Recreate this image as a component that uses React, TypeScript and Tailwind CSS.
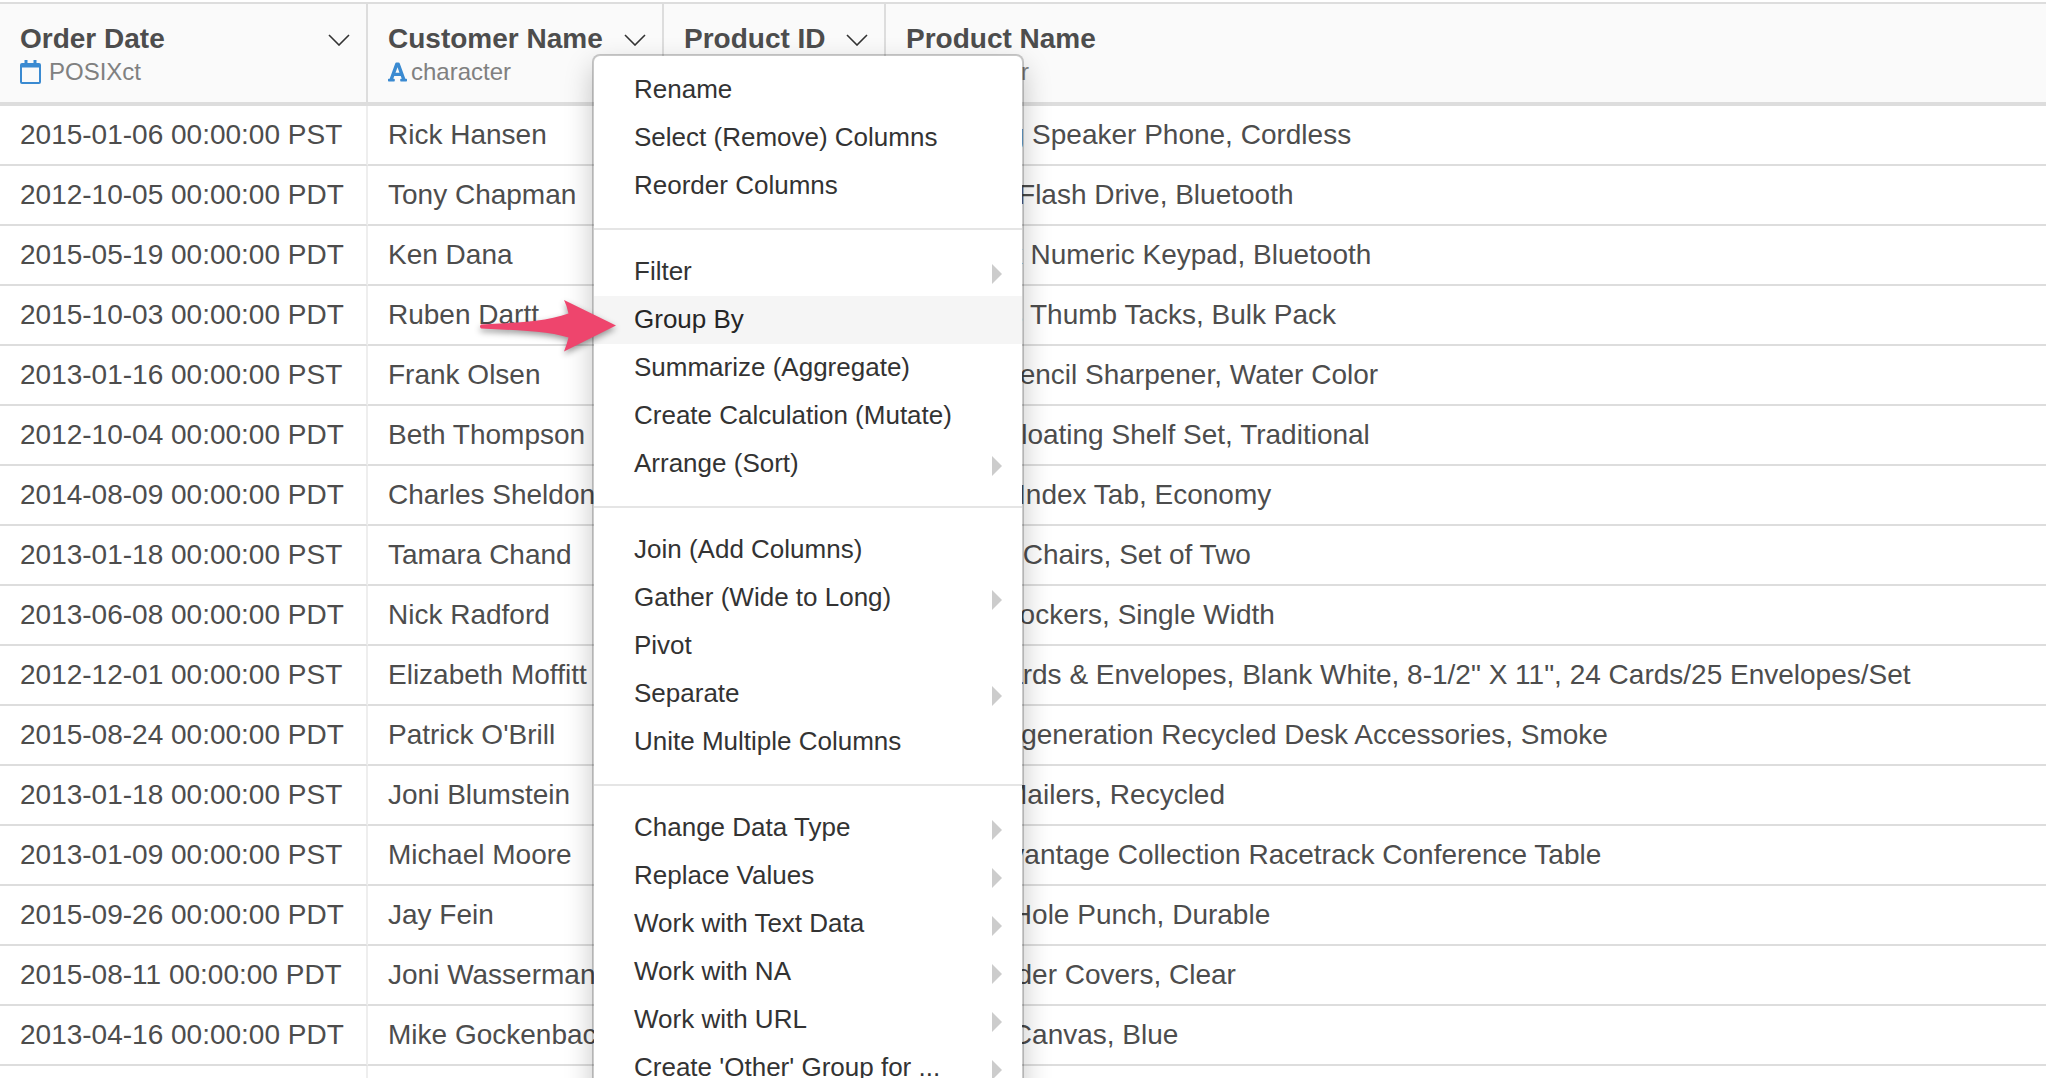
import { FaFont } from "react-icons/fa";

type ColumnType = "POSIXct" | "character";

const columns: { name: string; type: ColumnType; width: string; menu: boolean }[] = [
  { name: "Order Date", type: "POSIXct", width: "w-[368px]", menu: true },
  { name: "Customer Name", type: "character", width: "w-[296px]", menu: true },
  { name: "Product ID", type: "character", width: "w-[222px]", menu: true },
  { name: "Product Name", type: "character", width: "", menu: false },
];

const rows: [string, string, string, string][] = [
  ["2015-01-06 00:00:00 PST", "Rick Hansen", "", "Samsung Speaker Phone, Cordless"],
  ["2012-10-05 00:00:00 PDT", "Tony Chapman", "", "SanDisk Flash Drive, Bluetooth"],
  ["2015-05-19 00:00:00 PDT", "Ken Dana", "", "Memorex Numeric Keypad, Bluetooth"],
  ["2015-10-03 00:00:00 PDT", "Ruben Dartt", "", "Advantus Thumb Tacks, Bulk Pack"],
  ["2013-01-16 00:00:00 PST", "Frank Olsen", "", "Boston Pencil Sharpener, Water Color"],
  ["2012-10-04 00:00:00 PDT", "Beth Thompson", "", "Sauder Floating Shelf Set, Traditional"],
  ["2014-08-09 00:00:00 PDT", "Charles Sheldon", "", "Cardinal Index Tab, Economy"],
  ["2013-01-18 00:00:00 PST", "Tamara Chand", "", "Novimex Chairs, Set of Two"],
  ["2013-06-08 00:00:00 PDT", "Nick Radford", "", "Rogers Lockers, Single Width"],
  ["2012-12-01 00:00:00 PST", "Elizabeth Moffitt", "", "Xerox Cards & Envelopes, Blank White, 8-1/2\" X 11\", 24 Cards/25 Envelopes/Set"],
  ["2015-08-24 00:00:00 PDT", "Patrick O'Brill", "", "Eldon Regeneration Recycled Desk Accessories, Smoke"],
  ["2013-01-18 00:00:00 PST", "Joni Blumstein", "", "Cameo Mailers, Recycled"],
  ["2013-01-09 00:00:00 PST", "Michael Moore", "", "Bush Advantage Collection Racetrack Conference Table"],
  ["2015-09-26 00:00:00 PDT", "Jay Fein", "", "Sanford Hole Punch, Durable"],
  ["2015-08-11 00:00:00 PDT", "Joni Wasserman", "", "Acco Binder Covers, Clear"],
  ["2013-04-16 00:00:00 PDT", "Mike Gockenbach", "", "Sanford Canvas, Blue"],
  ["", "", "", ""],
];

const menuGroups: { label: string; submenu?: boolean; active?: boolean }[][] = [
  [{ label: "Rename" }, { label: "Select (Remove) Columns" }, { label: "Reorder Columns" }],
  [
    { label: "Filter", submenu: true },
    { label: "Group By", active: true },
    { label: "Summarize (Aggregate)" },
    { label: "Create Calculation (Mutate)" },
    { label: "Arrange (Sort)", submenu: true },
  ],
  [
    { label: "Join (Add Columns)" },
    { label: "Gather (Wide to Long)", submenu: true },
    { label: "Pivot" },
    { label: "Separate", submenu: true },
    { label: "Unite Multiple Columns" },
  ],
  [
    { label: "Change Data Type", submenu: true },
    { label: "Replace Values", submenu: true },
    { label: "Work with Text Data", submenu: true },
    { label: "Work with NA", submenu: true },
    { label: "Work with URL", submenu: true },
    { label: "Create 'Other' Group for ...", submenu: true },
  ],
];

function CalendarIcon() {
  return (
    <svg viewBox="0 0 21 24" className="mr-2 h-6 w-[21px] shrink-0 text-[#3a8ad1]" aria-hidden="true">
      <path
        fill="currentColor"
        fillRule="evenodd"
        d="M4.500 0h3v3h6V0h3v3H19a2 2 0 0 1 2 2v17a2 2 0 0 1-2 2H2a2 2 0 0 1-2-2V5a2 2 0 0 1 2-2h2.500zM2 7.500v14.500h17V7.500z"
      />
    </svg>
  );
}

function Chevron() {
  return (
    <svg viewBox="0 0 22 12" className="h-3 w-[22px]" fill="none" aria-hidden="true">
      <path d="M1 1l10 10L21 1" stroke="#333" strokeWidth="1.6" />
    </svg>
  );
}

function HeaderCell({ name, type, width, menu }: (typeof columns)[number]) {
  return (
    <th
      scope="col"
      className={`${width} h-[104px] border-t-2 border-r-2 border-b-4 border-[#ddd] bg-[#fafafa] pt-[18px] pr-4 pl-5 text-left align-top last:border-r-0`}
    >
      <div className="flex items-center justify-between">
        <span className="text-[28px] leading-[34px] font-bold text-[#4d4d4d]">{name}</span>
        {menu && (
          <button type="button" aria-label={`${name} options`} className="pt-0.5">
            <Chevron />
          </button>
        )}
      </div>
      <div className="flex items-center text-2xl leading-8 font-normal text-[#808080]">
        {type === "POSIXct" ? (
          <CalendarIcon />
        ) : (
          <FaFont className="mr-1 h-[22px] w-[19px] text-[#3a8ad1]" aria-hidden="true" />
        )}
        <span>{type}</span>
      </div>
    </th>
  );
}

function ColumnMenu() {
  return (
    <div
      role="menu"
      aria-label="Customer Name"
      className="absolute top-[54px] left-[592px] w-[432px] rounded-lg border-2 border-black/20 bg-white bg-clip-padding py-[10px] shadow-[0_12px_28px_rgba(0,0,0,0.22)]"
    >
      {menuGroups.map((group, i) => (
        <div
          key={i}
          role="group"
          className={i > 0 ? "mt-[18px] border-t-2 border-[#e5e5e5] pt-[18px]" : ""}
        >
          {group.map((item) => (
            <button
              key={item.label}
              type="button"
              role="menuitem"
              aria-haspopup={item.submenu ? "menu" : undefined}
              className={`flex h-12 w-full items-center justify-between pr-5 pl-10 text-left text-[26px] leading-9 ${
                item.active ? "bg-[#f5f5f5] text-[#262626]" : "text-[#333]"
              }`}
            >
              <span className="pb-0.5">{item.label}</span>
              {item.submenu && (
                <svg viewBox="0 0 10 24" className="h-6 w-[10px]" aria-hidden="true">
                  <path d="M0 4l10 10L0 24z" fill="#ccc" />
                </svg>
              )}
            </button>
          ))}
        </div>
      ))}
    </div>
  );
}

function PointerArrow() {
  return (
    <svg
      viewBox="0 0 140 56"
      className="pointer-events-none absolute top-[298px] left-[478px] h-14 w-[140px] drop-shadow-[0_3px_3px_rgba(0,0,0,0.4)]"
      aria-hidden="true"
    >
      <path
        fill="#ee456d"
        d="M3 26.500C32 25 68 24 90.500 15.500Q89 8 86 2L138 27.500L86 53.500Q89 46 90.500 39.500C70 33 34 32 3 30.500Q1 28.500 3 26.500z"
      />
    </svg>
  );
}

export default function App() {
  return (
    <main className="relative h-screen overflow-hidden bg-white pt-0.5 font-['Liberation_Sans',Arial,sans-serif]">
      <table className="w-full table-fixed border-separate border-spacing-0 whitespace-nowrap">
        <thead>
          <tr>
            {columns.map((column) => (
              <HeaderCell key={column.name} {...column} />
            ))}
          </tr>
        </thead>
        <tbody>
          {rows.map((row, i) => (
            <tr key={i}>
              {row.map((cell, j) => (
                <td
                  key={j}
                  className="h-[60px] overflow-hidden border-r-2 border-b-2 border-r-[#eee] border-b-[#ddd] pl-5 text-[28px] leading-9 text-[#4d4d4d] last:border-r-0"
                >
                  {cell}
                </td>
              ))}
            </tr>
          ))}
        </tbody>
      </table>
      <ColumnMenu />
      <PointerArrow />
    </main>
  );
}
